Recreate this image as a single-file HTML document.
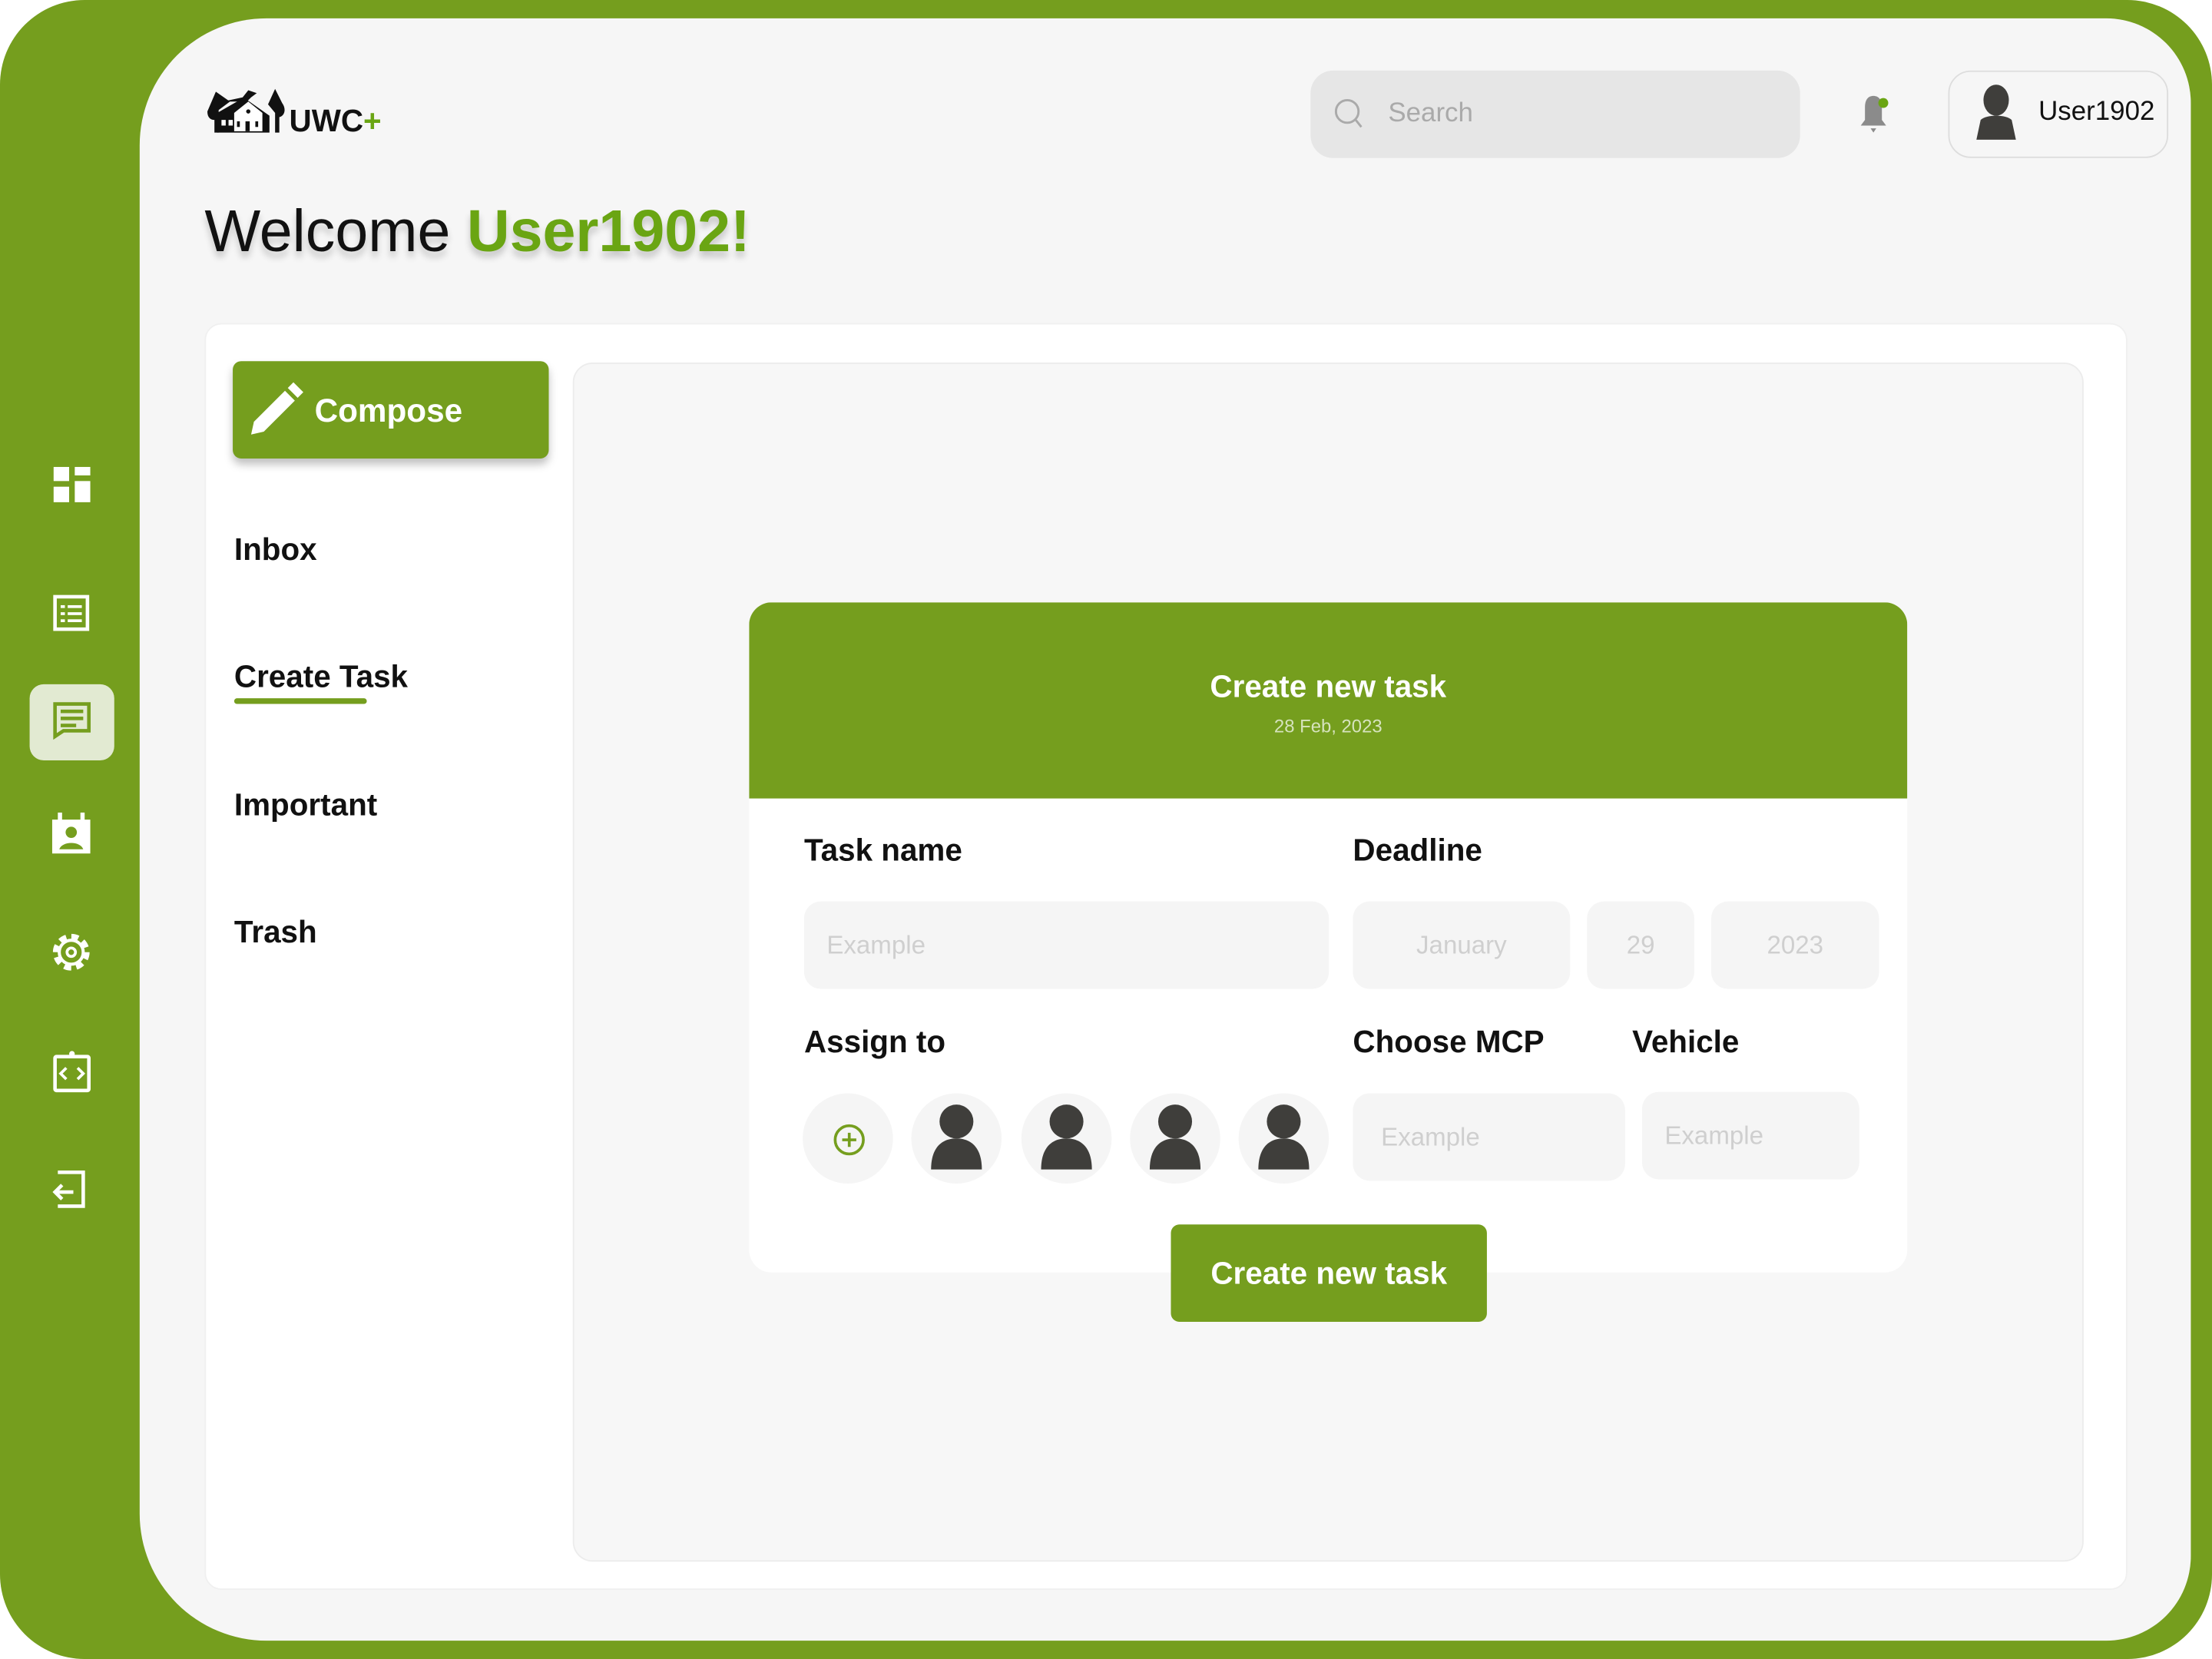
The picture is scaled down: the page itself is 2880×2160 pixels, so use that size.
<!DOCTYPE html>
<html><head><meta charset="utf-8"><style>
*{margin:0;padding:0;box-sizing:border-box}
html,body{width:2880px;height:2160px;overflow:hidden;background:#fff}
#w{position:absolute;left:0;top:0;width:1568px;height:1176px;transform:scale(1.836735);transform-origin:0 0;font-family:"Liberation Sans",sans-serif}
.a{position:absolute}
.lbl{font-size:22px;font-weight:bold;color:#111}
.inp{background:#f5f5f5;border-radius:12px;color:#cfcfcf;font-size:18px;display:flex;align-items:center}
.circ{width:64px;height:64px;border-radius:50%;background:#f5f5f5;top:775px}
.menu{left:166px;font-size:22px;font-weight:bold;color:#111}
</style></head><body><div id="w">
<div class="a" style="left:0;top:0;width:1568px;height:1176px;background:#759e1e;border-radius:60px"></div>
<div class="a" style="left:99px;top:13px;width:1454px;height:1150px;background:#f6f6f6;border-radius:90px 60px 60px 90px"></div>
<svg class="a" style="left:0;top:300px" width="99" height="580" viewBox="0 300 99 580" fill="#fff">
<rect x="38" y="331" width="11" height="10"/><rect x="53" y="331" width="11" height="6"/><rect x="38" y="345" width="11" height="11"/><rect x="53" y="341" width="11" height="15"/>
<rect x="39" y="423" width="23" height="23" fill="none" stroke="#fff" stroke-width="2.5"/><rect x="43" y="429" width="3" height="2"/><rect x="43" y="434" width="3" height="2"/><rect x="43" y="439" width="3" height="2"/><rect x="48" y="429" width="10" height="2"/><rect x="48" y="434" width="10" height="2"/><rect x="48" y="439" width="10" height="2"/>
<rect x="21" y="485" width="60" height="54" rx="10" fill="#e2ead2"/>
<path d="M39 499h24v19H45l-6 4z" fill="none" stroke="#759e1e" stroke-width="2.5"/><rect x="43" y="503" width="16" height="2.5" fill="#759e1e"/><rect x="43" y="508" width="16" height="2.5" fill="#759e1e"/><rect x="43" y="513" width="11" height="2.5" fill="#759e1e"/>
<path d="M37 581h27v24H37z"/><rect x="41" y="576" width="3" height="6"/><rect x="57" y="576" width="3" height="6"/><circle cx="50.5" cy="590" r="4" fill="#759e1e"/><path d="M42 602c2-6 15-6 17 0z" fill="#759e1e"/>
<circle cx="50.5" cy="675" r="11" fill="none" stroke="#fff" stroke-width="4" stroke-dasharray="5 3.64"/><circle cx="50.5" cy="675" r="8.5" fill="none" stroke="#fff" stroke-width="2.2"/><circle cx="50.5" cy="675" r="3" fill="none" stroke="#fff" stroke-width="2"/>
<rect x="39" y="749" width="24" height="24" rx="1" fill="none" stroke="#fff" stroke-width="2.5"/><circle cx="51" cy="747" r="2"/><path d="M47 757l-4 4 4 4M55 757l4 4-4 4" fill="none" stroke="#fff" stroke-width="2"/>
<path d="M41 831h18v24H41" fill="none" stroke="#fff" stroke-width="2.5"/><path d="M52 845H40M44 840l-5 5 5 5" fill="none" stroke="#fff" stroke-width="2.5"/>
</svg>
<svg class="a" style="left:146px;top:62px" width="60" height="34" viewBox="0 0 60 34">
<path d="M7 3L1 17c0 4 2 6 5 6v9h3V16l8-6z" fill="#111"/>
<path d="M44 12l5-11 5 10c3 4 2 9-2 10v11h-3V18z" fill="#111"/>
<path d="M12 10l14-3 4-5 6 2-4 3-3 3z" fill="#111"/>
<path d="M8 32V18l14-8 6-2 17 12v12z" fill="#111"/>
<path d="M20 31V18l10-8 10 8v13z" fill="#fff"/>
<rect x="11" y="23" width="3" height="4" fill="#fff"/><rect x="16" y="23" width="3" height="4" fill="#fff"/>
<rect x="22" y="24" width="2" height="4" fill="#111"/><rect x="28" y="24" width="3" height="7" fill="#111"/><rect x="35" y="24" width="2" height="4" fill="#111"/><circle cx="30" cy="17" r="1.5" fill="#111"/>
</svg>
<div class="a" style="left:205px;top:73px;font-size:22px;font-weight:bold;color:#111">UWC<span style="color:#6aa513">+</span></div>
<div class="a" style="left:145px;top:140px;font-size:42px;color:#111;text-shadow:0 4px 5px rgba(0,0,0,.2)">Welcome <b style="color:#6aa513">User1902!</b></div>
<div class="a" style="left:929px;top:50px;width:347px;height:62px;background:#e6e6e6;border-radius:16px"></div>
<svg class="a" style="left:945px;top:69px" width="24" height="24"><circle cx="10" cy="10" r="8" fill="none" stroke="#aaa" stroke-width="1.6"/><path d="M16 16l4 5" stroke="#aaa" stroke-width="1.6"/></svg>
<div class="a" style="left:984px;top:70px;font-size:19px;color:#aaa">Search</div>
<svg class="a" style="left:1316px;top:66px" width="24" height="30"><path d="M12 2c-4 0-6 3-6 8v9l-3 4h18l-3-4v-9c0-5-2-8-6-8z" fill="#8b8b8b"/><path d="M10 25h4l-2 3z" fill="#8b8b8b"/><circle cx="19" cy="7" r="3.5" fill="#6aa513"/></svg>
<div class="a" style="left:1381px;top:50px;width:156px;height:62px;border:1.5px solid #ddd;border-radius:16px;background:#f6f6f6"></div>
<svg class="a" style="left:1396px;top:58px" width="40" height="44"><ellipse cx="19" cy="13" rx="9" ry="11" fill="#3f3e3b"/><path d="M8 27c4-4 18-4 22 0l3 14H5z" fill="#3f3e3b"/></svg>
<div class="a" style="left:1445px;top:69px;font-size:19px;color:#111">User1902</div>
<div class="a" style="left:145px;top:229px;width:1363px;height:898px;background:#fff;border-radius:12px;border:1px solid #f0f0f0"></div>
<div class="a" style="left:165px;top:256px;width:224px;height:69px;background:#759e1e;border-radius:6px;box-shadow:0 4px 6px rgba(0,0,0,.25)"></div>
<svg class="a" style="left:174px;top:270px" width="42" height="42"><path d="M4 38l2-9 22-22 7 7-22 22z" fill="#fff"/><path d="M30 5l4-4 7 7-4 4z" fill="#fff"/></svg>
<div class="a" style="left:223px;top:278px;font-size:23px;font-weight:bold;color:#fff">Compose</div>
<div class="a menu" style="top:377px">Inbox</div>
<div class="a menu" style="top:467px">Create Task</div>
<div class="a" style="left:166px;top:495px;width:94px;height:4px;background:#759e1e;border-radius:2px"></div>
<div class="a menu" style="top:558px">Important</div>
<div class="a menu" style="top:648px">Trash</div>
<div class="a" style="left:406px;top:257px;width:1071px;height:850px;background:#f7f7f7;border:1px solid #ececec;border-radius:14px"></div>
<div class="a" style="left:531px;top:427px;width:821px;height:475px;background:#fff;border-radius:16px;overflow:hidden"><div style="height:139px;background:#759e1e"></div></div>
<div class="a" style="left:531px;top:474px;width:821px;text-align:center;font-size:22px;font-weight:bold;color:#fff">Create new task</div>
<div class="a" style="left:531px;top:507px;width:821px;text-align:center;font-size:13px;color:#d6e3bd">28 Feb, 2023</div>
<div class="a lbl" style="left:570px;top:590px">Task name</div>
<div class="a lbl" style="left:959px;top:590px">Deadline</div>
<div class="a inp" style="left:570px;top:639px;width:372px;height:62px;padding-left:16px">Example</div>
<div class="a inp" style="left:959px;top:639px;width:154px;height:62px;justify-content:center">January</div>
<div class="a inp" style="left:1125px;top:639px;width:76px;height:62px;justify-content:center">29</div>
<div class="a inp" style="left:1213px;top:639px;width:119px;height:62px;justify-content:center">2023</div>
<div class="a lbl" style="left:570px;top:726px">Assign to</div>
<div class="a lbl" style="left:959px;top:726px">Choose MCP</div>
<div class="a lbl" style="left:1157px;top:726px">Vehicle</div>
<div class="a circ" style="left:569px"></div>
<svg class="a" style="left:590px;top:796px" width="24" height="24"><circle cx="12" cy="12" r="10" fill="none" stroke="#759e1e" stroke-width="2"/><path d="M12 7v10M7 12h10" stroke="#759e1e" stroke-width="2"/></svg>
<div class="a circ" style="left:646px"></div><div class="a circ" style="left:724px"></div><div class="a circ" style="left:801px"></div><div class="a circ" style="left:878px"></div>
<svg class="a" style="left:646px;top:775px" width="310" height="64" fill="#3f3e3b">
<g><circle cx="32" cy="20" r="12"/><path d="M14 54c0-16 8-22 18-22s18 6 18 22z"/></g>
<g transform="translate(78 0)"><circle cx="32" cy="20" r="12"/><path d="M14 54c0-16 8-22 18-22s18 6 18 22z"/></g>
<g transform="translate(155 0)"><circle cx="32" cy="20" r="12"/><path d="M14 54c0-16 8-22 18-22s18 6 18 22z"/></g>
<g transform="translate(232 0)"><circle cx="32" cy="20" r="12"/><path d="M14 54c0-16 8-22 18-22s18 6 18 22z"/></g>
</svg>
<div class="a inp" style="left:959px;top:775px;width:193px;height:62px;padding-left:20px">Example</div>
<div class="a inp" style="left:1164px;top:774px;width:154px;height:62px;padding-left:16px">Example</div>
<div class="a" style="left:830px;top:868px;width:224px;height:69px;background:#759e1e;border-radius:6px;color:#fff;font-size:22px;font-weight:bold;display:flex;align-items:center;justify-content:center">Create new task</div>
</div></body></html>
